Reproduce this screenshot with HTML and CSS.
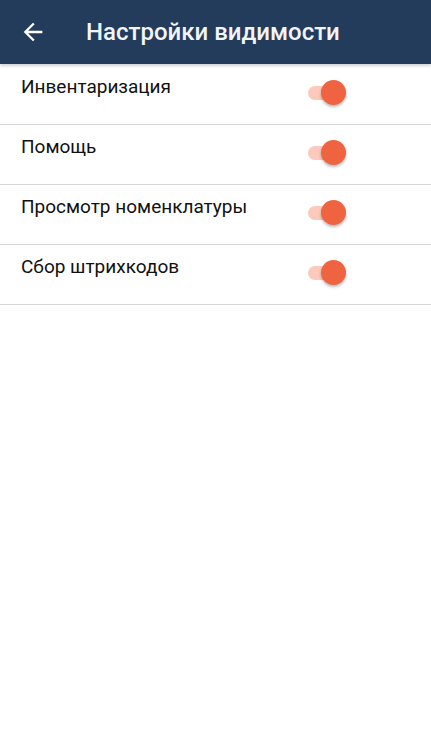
FILE: index.html
```html
<!DOCTYPE html>
<html lang="ru">
<head>
  <meta charset="UTF-8" />
  <meta name="viewport" content="width=device-width, initial-scale=1.0"/>
  <title>Настройки видимости</title>
  <link rel="stylesheet" href="styles.css">
</head>
<body>
  <div class="toolbar">
    <button class="back" aria-label="Назад">
      <svg width="28" height="28" viewBox="0 0 24 24"><path d="M20 11H7.83l5.59-5.59L12 4l-8 8 8 8 1.41-1.41L7.83 13H20v-2z" fill="#fff"/></svg>
    </button>
    <h1>Настройки видимости</h1>
  </div>

  <ul class="list">
    <li class="row">
      <span class="label">Инвентаризация</span>
      <span class="switch on"><span class="track"></span><span class="thumb"></span></span>
    </li>
    <li class="row">
      <span class="label">Помощь</span>
      <span class="switch on"><span class="track"></span><span class="thumb"></span></span>
    </li>
    <li class="row">
      <span class="label">Просмотр номенклатуры</span>
      <span class="switch on"><span class="track"></span><span class="thumb"></span></span>
    </li>
    <li class="row">
      <span class="label">Сбор штрихкодов</span>
      <span class="switch on"><span class="track"></span><span class="thumb"></span></span>
    </li>
  </ul>
</body>
</html>
```

FILE: styles.css
```css
body {
  margin: 0;
  font-family: Roboto, "Noto Sans", sans-serif;
  background: #fff;
}
.toolbar {
  height: 64px;
  background: #243c5c;
  display: flex;
  align-items: center;
  box-shadow: 0 2px 3px rgba(0,0,0,0.18);
  position: relative;
}
.back {
  background: none;
  border: none;
  padding: 0;
  margin: 0 0 0 19px;
  width: 28px;
  height: 28px;
  display: flex;
}
.toolbar h1 {
  margin: 0 0 0 39px;
  color: #f2f4f7;
  font-size: 24px;
  font-weight: 500;
}
.list {
  list-style: none;
  margin: 0;
  padding: 1px 0 0;
}
.row {
  height: 59px;
  border-bottom: 1px solid #d7d7d7;
  display: flex;
  justify-content: space-between;
  padding: 0 85px 0 21px;
}
.label {
  font-size: 19px;
  color: #111;
  padding-top: 10px;
}
.switch {
  position: relative;
  width: 38px;
  height: 25px;
  margin-top: 15px;
}
.track {
  position: absolute;
  left: 0;
  top: 6px;
  width: 34px;
  height: 14px;
  border-radius: 7px;
  background: #fccabd;
}
.thumb {
  position: absolute;
  right: 0;
  top: 0;
  width: 25px;
  height: 25px;
  border-radius: 50%;
  background: #ef6340;
  box-shadow: 0 2px 3px rgba(0,0,0,0.28);
}
```
